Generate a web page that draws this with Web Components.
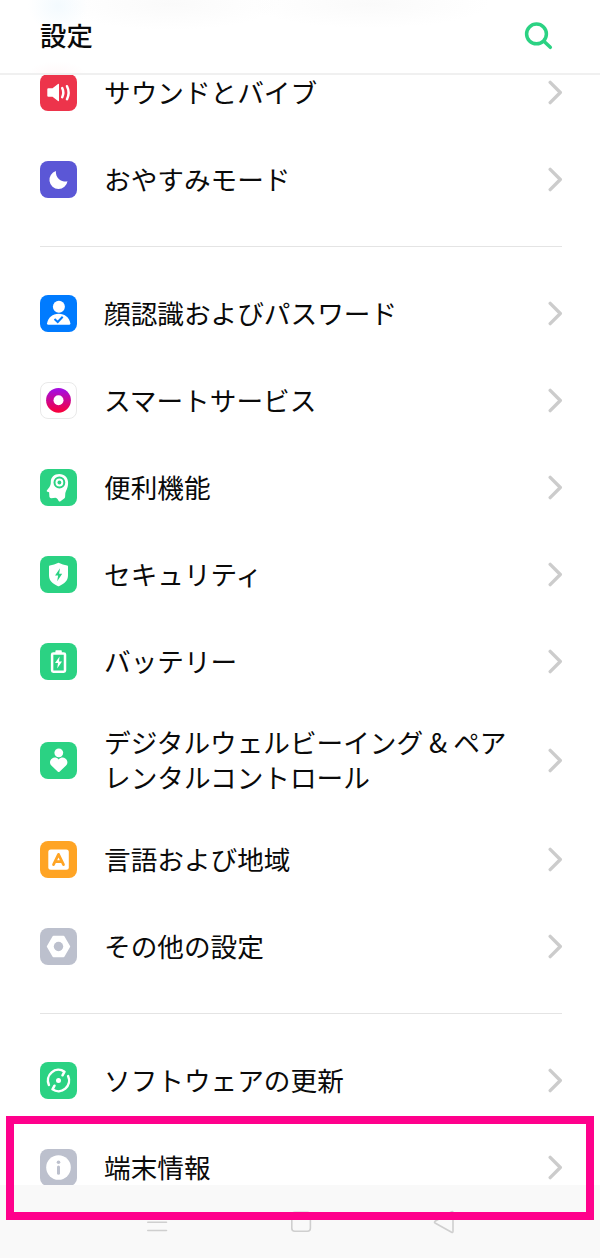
<!DOCTYPE html>
<html lang="ja">
<head>
<meta charset="utf-8">
<meta name="viewport" content="width=device-width">
<title>設定</title>
<style>
  body {
    margin: 0;
    background: #fff;
    color: #0a0a0a;
    font-family: "Noto Sans CJK JP", sans-serif;
    font-size: 26.65px;
  }
</style>
</head>
<body>
<settings-screen>
  <title-bar slot="header">設定</title-bar>

  <settings-group>
    <settings-row icon="sound">サウンドとバイブ</settings-row>
    <settings-row icon="moon">おやすみモード</settings-row>
  </settings-group>
  <settings-group>
    <settings-row icon="face">顔認識およびパスワード</settings-row>
    <settings-row icon="smart">スマートサービス</settings-row>
    <settings-row icon="head">便利機能</settings-row>
    <settings-row icon="shield">セキュリティ</settings-row>
    <settings-row icon="battery">バッテリー</settings-row>
    <settings-row icon="wellbeing" tall>デジタルウェルビーイング &amp; ペア<br>レンタルコントロール</settings-row>
    <settings-row icon="language">言語および地域</settings-row>
    <settings-row icon="other">その他の設定</settings-row>
  </settings-group>
  <settings-group>
    <settings-row icon="update">ソフトウェアの更新</settings-row>
    <settings-row icon="info">端末情報</settings-row>
  </settings-group>

  <nav-bar slot="footer"></nav-bar>
  <highlight-box slot="overlay"></highlight-box>
</settings-screen>

<script>
const GREEN = '#2bd283';

// background colour and glyph for each tile, on a 37x37 grid
const ICONS = {
  sound: ['#ed344b', `
    <path d="M8.3 14.2h4.2L18 10q1-.6 1 .6v15.8q0 1.2-1 .6l-5.5-4.2H8.3q-1 0-1-1v-6.6q0-1 1-1z" fill="#fff"/>
    <path d="M22.2 14q2.2 4.5 0 9.2M27 12.2q3.2 6.3 0 13" fill="none" stroke="#fff" stroke-width="2.5" stroke-linecap="round"/>`],
  moon: ['#5b57d6', `
    <path d="M15.9 10.1A9.1 9.1 0 1 0 27.5 20.2 9.3 9.3 0 0 1 15.9 10.1z" fill="#fff"/>`],
  face: ['#007bff', `
    <circle cx="18.9" cy="11.8" r="6" fill="#fff"/>
    <path d="M8.4 29.8q-1.5 0-1.3-1.5C8 22.5 12.5 18.7 18.7 18.7S29.4 22.5 30.3 28.3q.2 1.5-1.3 1.5z" fill="#fff"/>
    <path d="M14.5 24.1l3.200 2.900 5-5.200" fill="none" stroke="#007bff" stroke-width="2"/>`],
  smart: ['#fff', `
    <defs><linearGradient id="g" x1="0" y1="0" x2="0" y2="1">
      <stop offset="0.1" stop-color="#a70ddc"/><stop offset="1" stop-color="#fb0036"/>
    </linearGradient></defs>
    <rect x=".5" y=".5" width="36" height="36" rx="7.5" fill="none" stroke="#e9e9e9"/>
    <circle cx="18.5" cy="18.3" r="12.4" fill="url(#g)"/>
    <circle cx="18.5" cy="18.3" r="5" fill="#fff"/>`],
  head: [GREEN, `
    <path d="M19.300 5C14 5 10.800 8.400 10.800 13c0 2.300-.4 3.500-1.300 4.900l-2.700 3.700q-.5.900.6 1.200l1.700.4.3 4.600q.3 1.500 1.800 1.400l4.300-.5q1.300.1 2 1.400l1.200 1.900q.8.900 1.800.2l4-3q.7-.6.6-1.500-.3-3.600 1-5.900c1.300-2.400 2-4.700 2-8C28.100 8.500 24.700 5 19.300 5z" fill="#fff"/>
    <circle cx="19.400" cy="13.500" r="4.900" fill="none" stroke="${GREEN}" stroke-width="2"/>
    <circle cx="19.400" cy="13.500" r="1.900" fill="${GREEN}"/>`],
  shield: [GREEN, `
    <path d="M18.5 6.8q4.500 2.300 8.600 2.700.9.100.9 1v8.700c0 5.600-3.600 8.300-8.600 10.800q-.9.400-1.800 0C12.600 27.500 9 24.800 9 19.200v-8.700q0-.9.900-1 4.100-.4 8.600-2.700z" fill="#fff"/>
    <path d="M20 12.200l-5 7.300h3.100l-.9 5.700 5-7.500h-3.100z" fill="${GREEN}"/>`],
  battery: [GREEN, `
    <rect x="15.400" y="7.300" width="6.400" height="3" rx=".8" fill="#fff"/>
    <rect x="12.100" y="10.400" width="12.900" height="18.300" rx="1.200" fill="none" stroke="#fff" stroke-width="2.500"/>
    <path d="M19.600 13.500l-4.600 6.600h3l-.8 5.400 4.800-7h-3z" fill="#fff"/>`],
  wellbeing: [GREEN, `
    <circle cx="18.800" cy="10.800" r="4.400" fill="#fff"/>
    <path d="M18.700 17.500c1.800-2 4.500-2.500 6.600-1.100 2.700 1.800 2.700 5.200.5 7.400l-6 5.700q-1.100 1-2.200 0l-6-5.700c-2.200-2.200-2.200-5.600.5-7.400 2.100-1.400 4.800-.9 6.600 1.100z" fill="#fff"/>`],
  language: ['#ffa424', `
    <rect x="8.300" y="8.500" width="20.500" height="20.300" rx="2.500" fill="#fff"/>
    <path d="M13.500 23.700l5-10.400 5 10.400M15.500 20.600h6" fill="none" stroke="#ffa424" stroke-width="2.700" stroke-linecap="round" stroke-linejoin="round"/>`],
  other: ['#bcc0cd', `
    <path d="M13.500 9h10l5.500 9.500-5.500 9.500h-10L8 18.500z" fill="#fff" stroke="#fff" stroke-width="2.400" stroke-linejoin="round"/>
    <circle cx="18.500" cy="18.500" r="4.700" fill="#bcc0cd"/>`],
  update: [GREEN, `
    <g fill="none" stroke="#fff" stroke-width="2.500" stroke-linecap="round" stroke-linejoin="round">
      <path d="M8.900 22.900A10.600 10.600 0 0 1 24.500 9.700l-2 3.600"/>
      <path d="M28.100 14.100A10.600 10.600 0 0 1 12.500 27.300l2-3.600"/>
    </g>
    <circle cx="18.500" cy="18.500" r="2.500" fill="#fff"/>`],
  info: ['#bcc0cd', `
    <circle cx="18.500" cy="18.500" r="12.300" fill="#fff"/>
    <circle cx="18.500" cy="13.300" r="1.800" fill="#bcc0cd"/>
    <path d="M18.500 18v6.200" stroke="#bcc0cd" stroke-width="3" stroke-linecap="round"/>`],
};

class SettingsScreen extends HTMLElement {
  constructor() {
    super();
    this.attachShadow({ mode: 'open' }).innerHTML = `
      <style>
        :host {
          display: flex;
          flex-direction: column;
          position: relative;
          height: 1258px;
          overflow: hidden;
        }
        /* the list is scrolled a little way under the header */
        main {
          flex: 1;
          min-height: 0;
          margin-top: -26px;
          overflow: hidden;
        }
      </style>
      <slot name="header"></slot>
      <main><slot></slot></main>
      <slot name="footer"></slot>
      <slot name="overlay"></slot>
    `;
  }
}

class TitleBar extends HTMLElement {
  constructor() {
    super();
    this.attachShadow({ mode: 'open' }).innerHTML = `
      <style>
        :host {
          display: flex;
          justify-content: space-between;
          box-sizing: border-box;
          flex: none;
          height: 75px;
          padding: 16px 46px 0 40px;
          position: relative;
          z-index: 1;
          border-bottom: 2px solid #f0f0f0;
          background:
            radial-gradient(30px 26px at 58px 6px, #f3fafe, transparent),
            radial-gradient(110px 26px at 170px 4px, #fafafa, transparent),
            radial-gradient(120px 24px at 370px 4px, #fafafa, transparent),
            radial-gradient(30px 14px at 57px 75px, #fff8f9, transparent),
            #fff;
          font-size: 26.4px;
          font-weight: 500;
          line-height: 38px;
        }
        svg { display: block; }
      </style>
      <span><slot></slot></span>
      <svg width="32" height="38" viewBox="0 0 32 38" fill="none" stroke="#2bd283" stroke-width="3.500" stroke-linecap="round">
        <circle cx="14.500" cy="17.900" r="9.900"/>
        <path d="M21.900 25.300l6.400 6"/>
      </svg>
    `;
  }
}

class SettingsGroup extends HTMLElement {
  constructor() {
    super();
    this.attachShadow({ mode: 'open' }).innerHTML = `
      <style>
        :host { display: block; }
        :host(:not(:last-of-type))::after {
          content: "";
          display: block;
          height: 1px;
          margin: 23px 38px 23px 40px;
          background: #e4e4e4;
        }
      </style>
      <slot></slot>
    `;
  }
}

class SettingsRow extends HTMLElement {
  constructor() {
    super();
    const [color, glyph] = ICONS[this.getAttribute('icon')];
    this.attachShadow({ mode: 'open' }).innerHTML = `
      <style>
        :host {
          display: flex;
          align-items: center;
          height: 87px;
          padding: 0 36px 0 40px;
          line-height: 35px;
        }
        :host([tall]) { height: 111px; }
        svg { flex: none; display: block; }
        .label {
          flex: 1;
          margin-left: 27px;
          padding-bottom: 3px;
          white-space: nowrap;
        }
      </style>
      <svg width="37" height="37" viewBox="0 0 37 37">
        <rect width="37" height="37" rx="8" fill="${color}"/>
        ${glyph}
      </svg>
      <span class="label"><slot></slot></span>
      <svg width="16" height="25" viewBox="0 0 16 25" fill="none" stroke="#ccc" stroke-width="3.400" stroke-linecap="round" stroke-linejoin="round">
        <path d="M2.200 2.400L12.300 12.500 2.200 22.600"/>
      </svg>
    `;
  }
}

class NavBar extends HTMLElement {
  constructor() {
    super();
    this.attachShadow({ mode: 'open' }).innerHTML = `
      <style>
        :host {
          display: flex;
          justify-content: space-between;
          align-items: center;
          box-sizing: border-box;
          flex: none;
          height: 73px;
          padding: 0 144px 0 145px;
          background: #f9f9f9;
        }
        svg { fill: none; stroke: #cfcfcf; stroke-width: 1.6; stroke-linejoin: round; stroke-linecap: round; }
      </style>
      <svg width="24" height="24"><path d="M2.800 4h18.700M2.800 12.300h18.700M2.800 20.500h18.700"/></svg>
      <svg width="24" height="24"><rect x="2.800" y="2.300" width="18.600" height="19" rx="3"/></svg>
      <svg width="24" height="24"><path d="M19.700 1.800q1.300-.6 1.300 1v18.500q0 1.600-1.400 1L3 13q-1-.9 0-1.700z"/></svg>
    `;
  }
}

class HighlightBox extends HTMLElement {
  constructor() {
    super();
    this.attachShadow({ mode: 'open' }).innerHTML = `
      <style>
        :host {
          position: absolute;
          inset: 1116px 6px 38px;
          border: 8px solid #ff008c;
          z-index: 2;
        }
      </style>
    `;
  }
}

customElements.define('settings-screen', SettingsScreen);
customElements.define('title-bar', TitleBar);
customElements.define('settings-group', SettingsGroup);
customElements.define('settings-row', SettingsRow);
customElements.define('nav-bar', NavBar);
customElements.define('highlight-box', HighlightBox);
</script>
</body>
</html>
